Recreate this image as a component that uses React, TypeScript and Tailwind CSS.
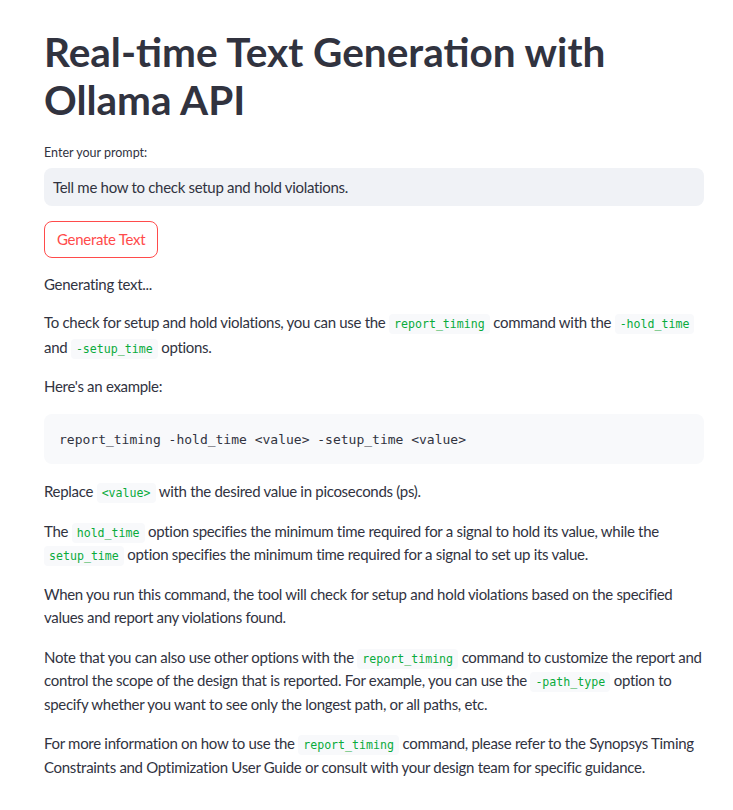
import React from 'react';

const Code = ({ children }: { children: React.ReactNode }) => (
  <code className="rounded-[4px] bg-[#f8f9fb] px-[5px] py-[3px] text-[11.6px] leading-none tracking-normal text-[#09ab3b] font-['DejaVu_Sans_Mono',monospace]">
    {children}
  </code>
);

const P = ({ children }: { children: React.ReactNode }) => (
  <p className="mb-4 leading-[23.5px] whitespace-nowrap">{children}</p>
);

const App = () => {
  return (
    <div className="min-h-screen bg-white text-[#31333f] font-['Lato',sans-serif] text-[15px] tracking-[-0.3px]">
      <div className="pl-[44px] pr-[29px] pt-[28px] pb-[20px]">
        <h1 className="text-[40.5px] leading-[48px] font-bold tracking-normal mb-[20px]">
          Real-time Text Generation with
          <br />
          Ollama API
        </h1>

        <label className="block text-[12.5px] tracking-normal mb-[5px]">Enter your prompt:</label>
        <div className="h-[38px] rounded-[8px] bg-[#f0f2f6] px-[9px] flex items-center mb-[15px]">
          Tell me how to check setup and hold violations.
        </div>

        <button className="h-[37px] px-[12px] rounded-[8px] border border-[#ff4b4b] text-[#ff4b4b] bg-white mb-[14px]">
          Generate Text
        </button>

        <p className="mb-[14px] leading-6">Generating text...</p>

        <p className="mb-[15px] leading-[25px] whitespace-nowrap">
          To check for setup and hold violations, you can use the <Code>report_timing</Code> command with the{' '}
          <Code>-hold_time</Code>
          <br />
          and <Code>-setup_time</Code> options.
        </p>

        <P>Here's an example:</P>

        <pre className="mb-4 rounded-[8px] bg-[#f8f9fb] h-[50px] px-[15px] flex items-center text-[13px] tracking-normal text-[#31333f] font-['DejaVu_Sans_Mono',monospace]">
          report_timing -hold_time &lt;value&gt; -setup_time &lt;value&gt;
        </pre>

        <P>
          Replace <Code>&lt;value&gt;</Code> with the desired value in picoseconds (ps).
        </P>

        <P>
          The <Code>hold_time</Code> option specifies the minimum time required for a signal to hold its value, while the
          <br />
          <Code>setup_time</Code> option specifies the minimum time required for a signal to set up its value.
        </P>

        <P>
          When you run this command, the tool will check for setup and hold violations based on the specified
          <br />
          values and report any violations found.
        </P>

        <P>
          Note that you can also use other options with the <Code>report_timing</Code> command to customize the report and
          <br />
          control the scope of the design that is reported. For example, you can use the <Code>-path_type</Code> option to
          <br />
          specify whether you want to see only the longest path, or all paths, etc.
        </P>

        <P>
          For more information on how to use the <Code>report_timing</Code> command, please refer to the Synopsys Timing
          <br />
          Constraints and Optimization User Guide or consult with your design team for specific guidance.
        </P>
      </div>
    </div>
  );
};

export default App;
